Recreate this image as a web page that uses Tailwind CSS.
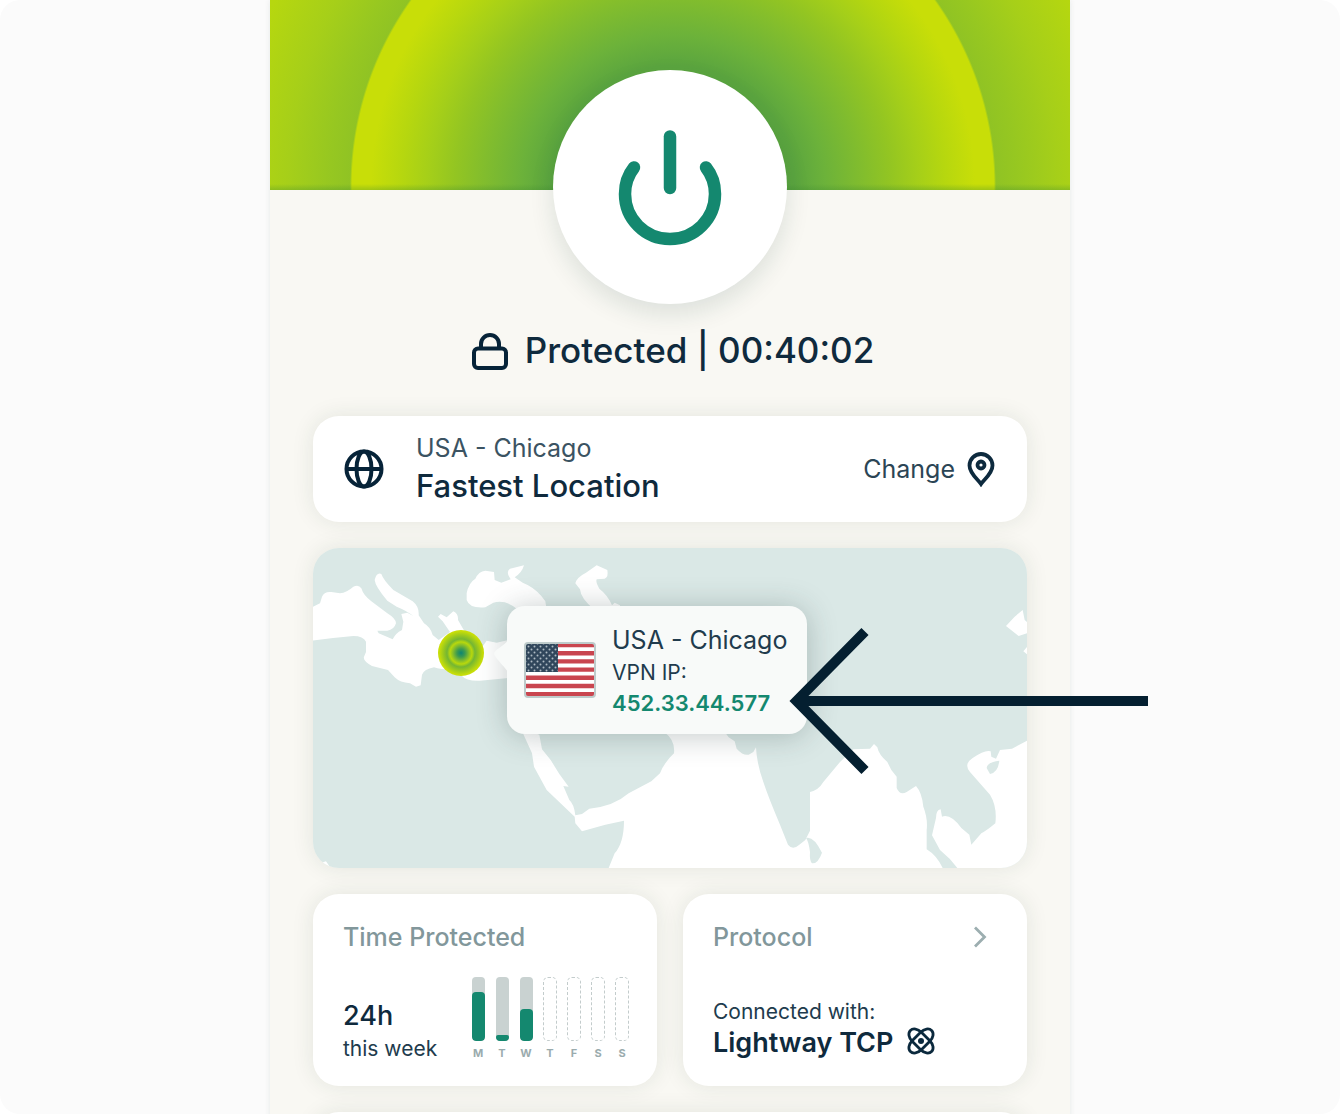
<!DOCTYPE html>
<html lang="en">
<head>
<meta charset="utf-8">
<meta name="viewport" content="width=device-width, initial-scale=1">
<title>VPN – Protected</title>
<script src="https://cdn.jsdelivr.net/npm/@tailwindcss/browser@4"></script>
</head>
<body class="bg-white font-['Inter',sans-serif] text-[#0f2a3d]">
<div class="h-screen overflow-hidden rounded-[20px] bg-[#fbfbfb]">
<main class="mx-auto min-h-full max-w-[800px] bg-[#f9f8f3] shadow-[0_0_6px_rgba(20,50,40,0.09)]">

  <header class="h-[190px] bg-[radial-gradient(circle_at_403px_187px,#55a03f_0px,#5ba53f_122px,#6cb23a_152px,#82bd2d_190px,#93c522_218px,#a5cf19_245px,#b6d70f_272px,#c8de08_302px,#c8de08_321px,#90c324_323px,#96c721_343px,#a6cf19_385px,#b6d70f_440px)]">
    <div class="h-full bg-linear-to-t from-[#3f8a30]/30 to-transparent to-[6px]"></div>
  </header>

  <section class="flex flex-col items-center">
    <button type="button" aria-label="Disconnect" class="relative z-10 -mt-[120px] grid size-[234px] place-items-center rounded-full bg-white shadow-[0_10px_24px_rgba(20,60,50,0.12)]">
      <svg class="size-[120px]" viewBox="0 0 120 120" fill="none" stroke="#14886f" stroke-width="12.5" stroke-linecap="round"><path d="M60 9.500V61"/><path d="M24 40.500C18 48 15 56 15 67a45 45 0 0 0 90 0c0-11-3-19-9-26.500"/></svg>
    </button>
    <p class="mt-[22px] flex h-12 items-center gap-4 pl-[5px] text-[35px] leading-[48px] font-medium">
      <svg class="h-10 w-[38px]" viewBox="0 0 38 40" fill="none" stroke="#062338" stroke-width="4"><rect x="3" y="18.500" width="32" height="19.500" rx="4"/><path d="M10 18v-4a9 9 0 0 1 18 0v4"/></svg>
      <span>Protected | 00:40:02</span>
    </p>
  </section>

  <div class="mt-[42px] flex flex-col gap-[26px] px-[43px]">

    <section class="flex h-[106px] items-center rounded-[26px] bg-white px-[31px] shadow-[0_0_22px_rgba(30,60,40,0.1)]">
      <svg class="mr-8 size-10" viewBox="0 0 40 40" fill="none" stroke="#062338" stroke-width="4"><circle cx="20" cy="20" r="17.500"/><ellipse cx="20" cy="20" rx="7.500" ry="17.500"/><path d="M2.500 20h35"/></svg>
      <div class="flex-1 pb-1">
        <p class="text-[25px] leading-[38px] text-[#3b5362]">USA - Chicago</p>
        <p class="text-[31px] leading-[38px] font-medium">Fastest Location</p>
      </div>
      <button type="button" class="flex items-center gap-3 text-[25px] leading-[38px] text-[#2b4555]">
        <span>Change</span>
        <svg class="mr-px h-9 w-7" viewBox="0 0 28 36" fill="none" stroke="#0d2a3e" stroke-width="3.800"><path d="M14 33C11 28.500 2.500 22.500 2.500 14.500a11.500 11.500 0 0 1 23 0C25.500 22.500 17 28.500 14 33z"/><circle cx="14" cy="14" r="3.500"/></svg>
      </button>
    </section>

    <section class="relative h-[320px] rounded-[26px] shadow-[0_0_22px_rgba(30,60,40,0.1)]">
      <svg class="size-full rounded-[26px]" viewBox="39 24 2142 960" preserveAspectRatio="xMidYMid slice" role="img" aria-label="Map">
        <rect x="39" y="24" width="2142" height="960" fill="#dae8e6"/>
        <g fill="#fff">
          <path d="M30 205L60 190 66 170Q72 154 94 156L120 160Q140 158 160 140 176 132 184 145 190 166 214 184L262 220Q288 236 288 250 282 270 262 272L232 272 236 280 278 298Q286 280 306 270L310 245 304 222 322 218 340 228Q320 212 290 200L262 182Q226 140 224 120 230 96 244 102 250 120 280 150L338 184Q358 200 356 226L372 250Q392 262 398 285L416 300 450 276 428 244 414 230 422 222 440 232 460 214Q476 222 474 240L490 268 540 330 560 302 590 308 625 300V414L540 422Q500 424 486 408L460 390Q420 388 402 382 372 388 366 404L362 436 348 440 330 430Q300 428 284 412L264 390 216 378Q188 362 192 350L198 336V305Q190 288 160 288 90 294 30 303Z"/>
          <path d="M500 160Q506 128 526 116 536 94 556 92L582 96 584 120 604 128 632 118Q616 96 630 86L672 76Q666 98 644 112L668 128Q700 140 724 168L736 184 740 210H655Q620 178 580 188L556 202Q508 206 500 180Z"/>
          <path d="M826 130Q830 112 858 98L890 76 922 90Q926 112 914 116L890 118Q886 126 898 146 924 166 936 196L944 188 960 196V210H884Q842 176 840 148Z"/>
          <path d="M660 560L718 584 726 628 752 660 778 702 806 740 790 738 808 780Q822 792 826 826L846 822 868 806Q940 800 986 760L1054 724 1080 700Q1092 668 1122 640 1126 600 1095 578H1276L1286 592 1304 604 1310 626Q1330 648 1346 644L1360 636 1368 622Q1370 670 1390 726 1406 774 1440 854L1464 914Q1478 932 1498 914L1516 900 1530 872V756Q1556 750 1570 726L1620 666 1660 628 1710 626 1722 612 1732 622Q1736 644 1762 666L1774 690 1790 710V744Q1800 768 1820 756L1848 738Q1866 758 1870 800 1884 836 1880 870V928Q1910 946 1928 984H926L944 940Q972 908 972 842L916 854 846 874 826 850 824 830 740 750 702 680 696 640Z"/>
          <path d="M2185 600L2136 626 2100 630 2088 656 2074 650 2072 634Q2056 628 2018 654 1990 672 2010 696L2070 764Q2092 800 2086 850 2060 872 2044 880L2014 914 2008 884 1984 864Q1952 820 1926 830L1922 808Q1908 810 1908 834L1896 886 1920 930Q1950 954 1972 984H2185Z"/>
          <path d="M2118 258L2144 230 2168 210 2174 240 2185 250V278L2156 288ZM2170 334L2185 316V346Z"/>
          <path d="M60 970L78 964 92 984H60Z"/>
        </g>
        <g fill="#dae8e6"><path d="M1518 894Q1540 886 1566 938 1554 972 1536 970 1528 962 1530 936 1526 904 1518 894Z"/><path d="M2060 684Q2062 666 2098 662 2094 698 2070 702Z"/></g>
      </svg>

      <span class="absolute top-[82px] left-[125px] size-[46px] rounded-full bg-[radial-gradient(circle,#0c8573_0px,#3c9a50_4px,#84bd2b_8px,#b8d80c_11px,#74b633_14px,#93c522_17px,#c8de08_22px)]"></span>

      <div class="absolute top-[58px] left-[194px] flex h-32 w-[300px] items-center rounded-[18px] bg-[#f8faf9] pl-[17px] shadow-[0_2px_30px_rgba(40,60,60,0.28)]">
        <svg class="absolute top-[30px] -left-[15px] h-10 w-4" viewBox="0 0 16 40" fill="#f8faf9"><path d="M16 4C12 10 2 14 2 17.500S12 30 16 36z"/></svg>
        <svg class="mr-4 h-14 w-[72px]" viewBox="0 0 72 56" role="img" aria-label="United States flag">
          <defs><pattern id="stars" width="6" height="6" patternUnits="userSpaceOnUse"><circle cx="1.500" cy="1.500" r="1" fill="#aebbc3"/><circle cx="4.500" cy="4.500" r="1" fill="#aebbc3"/></pattern><clipPath id="flag"><rect x="1" y="1" width="70" height="54" rx="3"/></clipPath></defs>
          <g clip-path="url(#flag)"><rect width="72" height="56" fill="#fff"/><path stroke="#c9454f" stroke-width="4.400" d="M0 3h72M0 11.200h72M0 19.400h72M0 27.600h72M0 35.800h72M0 44h72M0 52.200h72"/><rect width="34" height="30" fill="#30465b"/><rect width="34" height="30" fill="url(#stars)"/></g>
          <rect x="1" y="1" width="70" height="54" rx="3" fill="none" stroke="#becbcb" stroke-width="2"/>
        </svg>
        <div>
          <p class="text-[25px] leading-9 text-[#213b4d]">USA - Chicago</p>
          <p class="text-[21px] leading-[30px] text-[#213b4d]">VPN IP:</p>
          <p class="text-[22px] leading-[30px] font-semibold text-[#14886f]">452.33.44.577</p>
        </div>
      </div>

      <svg class="absolute top-[79px] left-[476px] z-10 h-[148px] w-[360px]" viewBox="0 0 360 148" fill="none" stroke="#041f30" stroke-width="10"><path d="M76 4.500L7.500 74 76 143.500M8 74h351"/></svg>
    </section>

    <div class="grid grid-cols-2 gap-[26px]">
      <section class="flex h-48 flex-col justify-between rounded-[26px] bg-white px-[30px] pt-[25px] pb-[22px] shadow-[0_0_22px_rgba(30,60,40,0.1)]">
        <h2 class="text-[25px] leading-9 font-medium text-[#82979b]">Time Protected</h2>
        <div class="flex items-end justify-between">
          <div>
            <p class="text-[27px] leading-9 font-medium">24h</p>
            <p class="text-[21px] leading-[30px] text-[#213b4d]">this week</p>
          </div>
          <div class="-mr-[7px] mb-[3px] grid grid-cols-7 text-center text-[11px] leading-4 font-bold text-[#9aabad]">
            <div class="flex w-6 flex-col items-center gap-1"><span class="flex h-16 w-[13px] items-end overflow-hidden rounded-[4px] bg-[#c9d2d1]"><span class="h-[49px] w-full rounded-[4px] bg-[#14886f]"></span></span>M</div>
            <div class="flex w-6 flex-col items-center gap-1"><span class="flex h-16 w-[13px] items-end overflow-hidden rounded-[4px] bg-[#c9d2d1]"><span class="h-[6px] w-full rounded-[2px] bg-[#14886f]"></span></span>T</div>
            <div class="flex w-6 flex-col items-center gap-1"><span class="flex h-16 w-[13px] items-end overflow-hidden rounded-[4px] bg-[#c9d2d1]"><span class="h-8 w-full rounded-[4px] bg-[#14886f]"></span></span>W</div>
            <div class="flex w-6 flex-col items-center gap-1"><span class="h-16 w-[14px] rounded-[5px] border border-dashed border-[#c3cccc]"></span>T</div>
            <div class="flex w-6 flex-col items-center gap-1"><span class="h-16 w-[14px] rounded-[5px] border border-dashed border-[#c3cccc]"></span>F</div>
            <div class="flex w-6 flex-col items-center gap-1"><span class="h-16 w-[14px] rounded-[5px] border border-dashed border-[#c3cccc]"></span>S</div>
            <div class="flex w-6 flex-col items-center gap-1"><span class="h-16 w-[14px] rounded-[5px] border border-dashed border-[#c3cccc]"></span>S</div>
          </div>
        </div>
      </section>

      <section class="flex h-48 flex-col justify-between rounded-[26px] bg-white px-[30px] pt-[25px] pb-[25px] shadow-[0_0_22px_rgba(30,60,40,0.1)]">
        <div class="flex items-center justify-between">
          <h2 class="text-[25px] leading-9 font-medium text-[#82979b]">Protocol</h2>
          <svg class="mr-[9px] h-6 w-4" viewBox="0 0 16 24" fill="none" stroke="#9caeb0" stroke-width="2.800"><path d="M3 2.500l9.500 9.500L3 21.500"/></svg>
        </div>
        <div>
          <p class="text-[21px] leading-[26px] text-[#213b4d]">Connected with:</p>
          <p class="flex items-center gap-3 text-[27px] leading-9 font-semibold"><span>Lightway TCP</span>
            <svg class="mb-1 size-8" viewBox="0 0 32 32" fill="none" stroke="#0b293d" stroke-width="2.800"><rect x="1" y="9.500" width="30" height="13" rx="9" ry="6.500" transform="rotate(45 16 16)"/><rect x="1" y="9.500" width="30" height="13" rx="9" ry="6.500" transform="rotate(-45 16 16)"/><circle cx="16" cy="16" r="3" fill="#0b293d" stroke="none"/></svg>
          </p>
        </div>
      </section>
    </div>

    <section class="h-24 rounded-[26px] bg-white shadow-[0_0_22px_rgba(30,60,40,0.1)]"></section>
  </div>
</main>
</div>
</body>
</html>
